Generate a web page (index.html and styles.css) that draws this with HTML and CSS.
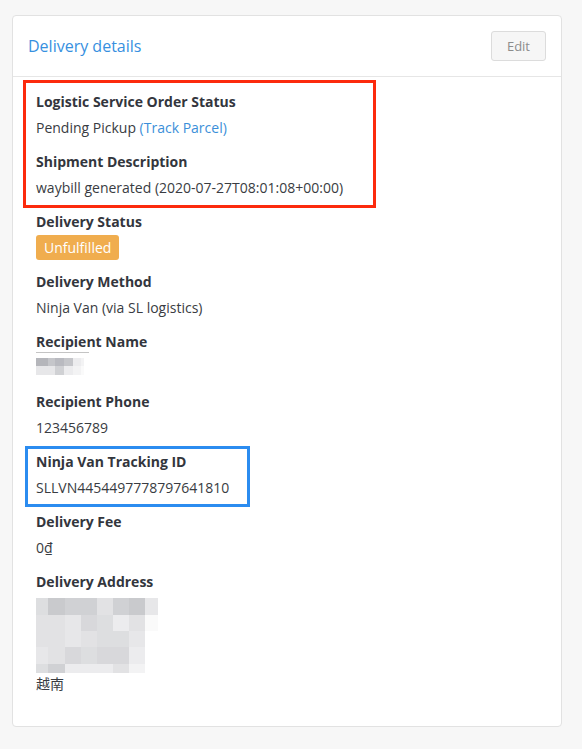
FILE: index.html
```html
<!DOCTYPE html>
<html>
<head>
<meta charset="utf-8">
<link rel="stylesheet" href="styles.css">
</head>
<body>
<div class="card">
  <div class="card-header">
    <h2 class="title">Delivery details</h2>
    <button class="btn">Edit</button>
  </div>
  <div class="card-body">
    <div class="mark mark-red"></div>
    <div class="mark mark-blue"></div>

    <div class="field">
      <div class="label">Logistic Service Order Status</div>
      <div class="value">Pending Pickup <a class="link">(Track Parcel)</a></div>
    </div>
    <div class="field">
      <div class="label">Shipment Description</div>
      <div class="value">waybill generated (2020-07-27T08:01:08+00:00)</div>
    </div>
    <div class="field">
      <div class="label">Delivery Status</div>
      <div class="value"><span class="badge">Unfulfilled</span></div>
    </div>
    <div class="field">
      <div class="label">Delivery Method</div>
      <div class="value">Ninja Van (via SL logistics)</div>
    </div>
    <div class="field">
      <div class="label"><span class="uline">Recipient</span> Name</div>
      <div class="value value-fixed">
        <div class="blur blur-name">
          <i class="n1"></i><i class="n2"></i><i class="n3"></i><i class="n2"></i><i class="g"></i><i class="h"></i>
          <i class="f"></i><i class="f"></i><i class="b"></i><i class="g"></i><i class="h"></i><i class="w"></i>
        </div>
      </div>
    </div>
    <div class="field">
      <div class="label">Recipient Phone</div>
      <div class="value">123456789</div>
    </div>
    <div class="field">
      <div class="label">Ninja Van Tracking ID</div>
      <div class="value">SLLVN4454497778797641810</div>
    </div>
    <div class="field">
      <div class="label">Delivery Fee</div>
      <div class="value">0₫</div>
    </div>
    <div class="field">
      <div class="label">Delivery Address</div>
      <div class="value address">
        <div class="blur blur-addr">
          <i class="d"></i><i class="a"></i><i class="b"></i><i class="b"></i><i class="e"></i><i class="b"></i><i class="a"></i><i class="f"></i>
          <i class="e"></i><i class="e"></i><i class="f"></i><i class="c"></i><i class="d"></i><i class="g"></i><i class="e"></i><i class="w"></i>
          <i class="e"></i><i class="e"></i><i class="f"></i><i class="e"></i><i class="d"></i><i class="d"></i><i class="f"></i><i class="x"></i>
          <i class="f"></i><i class="e"></i><i class="c"></i><i class="d"></i><i class="c"></i><i class="c"></i><i class="g"></i><i class="x"></i>
          <i class="d"></i><i class="b"></i><i class="g"></i><i class="g"></i><i class="g"></i><i class="e"></i><i class="h"></i><i class="x"></i>
        </div>
        <div class="country">越南</div>
      </div>
    </div>
  </div>
</div>
</body>
</html>
```
FILE: styles.css
```css
html, body {
  margin: 0;
  padding: 0;
  background: #f7f7f7;
}
body {
  padding: 15px 20px 22px 12px;
  font-family: "Open Sans", "Noto Sans CJK SC", sans-serif;
  font-size: 14px;
  color: #393c42;
}
.card {
  background: #fff;
  border: 1px solid #e2e2e2;
  border-radius: 4px;
  height: 710px;
  box-sizing: content-box;
}
.card-header {
  display: flex;
  align-items: center;
  justify-content: space-between;
  padding: 15px 15px 15px 15px;
  border-bottom: 1px solid #e6e6e6;
}
.title {
  margin: 0;
  font-size: 16px;
  font-weight: 400;
  color: #3790df;
  line-height: 29px;
}
.btn {
  height: 30px;
  padding: 0 15px;
  border: 1px solid #dcdcdc;
  border-radius: 3px;
  background: #f6f6f6;
  color: #8c8c8c;
  font-family: "Open Sans", sans-serif;
  font-size: 13px;
}
.card-body {
  position: relative;
  padding: 15px 23px 15px 23px;
}
.field {
  margin-bottom: 14px;
}
.label {
  font-weight: 700;
  line-height: 20px;
  color: #33363d;
}
.value {
  margin-top: 6px;
  line-height: 20px;
}
.value-fixed {
  height: 20px;
}
.link {
  color: #3b8fd9;
}
.badge {
  display: inline-block;
  background: #f0ad4e;
  color: #fff;
  border-radius: 3px;
  padding: 2px 8px;
  line-height: 21px;
  margin: -3px 0 -2px;
  vertical-align: top;
}
.uline {
  position: relative;
}
.uline::after {
  content: "";
  position: absolute;
  left: 0;
  bottom: -2px;
  width: 53px;
  height: 1px;
  background: #c4c4c4;
}
.blur {
  display: grid;
}
.blur i {
  display: block;
}
.blur-name {
  margin-top: 4px;
  grid-template-columns: 12px 7px 9px 9px 8px 3px;
  grid-template-rows: 8px 9px;
  width: 48px;
}
.blur-addr {
  margin-top: 4px;
  grid-template-columns: 12px 17px 16px 16px 16px 16px 16px 13px;
  grid-template-rows: 17px 16px 16px 17px 9px;
  width: 122px;
}
.country {
  margin-top: 1px;
}
.n1 { background: #b5b6bb; }
.n2 { background: #c5c6ca; }
.n3 { background: #b9bac0; }
.a { background: #c9cacd; }
.b { background: #d0d1d4; }
.c { background: #d8d8db; }
.d { background: #dddee0; }
.e { background: #e2e2e4; }
.f { background: #e7e7e9; }
.g { background: #ececee; }
.h { background: #f3f3f4; }
.w { background: #fafafa; }
.x { background: transparent; }
.mark {
  position: absolute;
  box-sizing: border-box;
  border: 3px solid;
  pointer-events: none;
}
.mark-red {
  border-color: #fc2a0d;
  left: 10px;
  top: 3px;
  width: 353px;
  height: 128px;
}
.mark-blue {
  border-color: #2b8cf0;
  left: 12px;
  top: 369px;
  width: 225px;
  height: 61px;
}
```
